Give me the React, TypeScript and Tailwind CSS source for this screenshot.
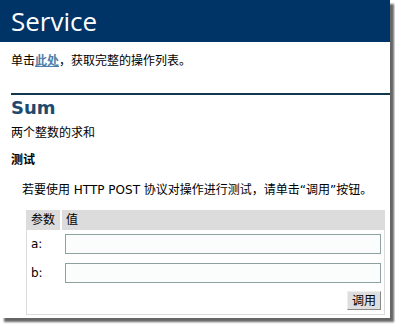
import React from "react";

const CJK = "font-['DejaVu_Sans','Noto_Sans_CJK_SC',sans-serif]";

export default function App() {
  return (
    <div className="w-[395px] h-[325px] bg-white overflow-hidden">
      <div className={`w-[390px] h-[318px] bg-white shadow-[4px_4px_2px_#666] overflow-hidden ${CJK} text-[12px] text-black`}>
        <div className="h-[42px] bg-[#003366] flex items-center pl-[11px]">
          <span className="text-white text-[26px] leading-none font-['Open_Sans',sans-serif]">Service</span>
        </div>
        <div className="pl-[11px] pt-[11px] leading-[16px]">
          单击<a className="font-bold text-[#4f7fa8] underline">此处</a>，获取完整的操作列表。
        </div>
        <div className="ml-[11px] mt-[24px] h-[2px] bg-[#13384d]" />
        <div className="pl-[11px] mt-[2px] text-[18px] font-bold text-[#1d4a6e] leading-[22px] font-['DejaVu_Sans',sans-serif]">Sum</div>
        <div className="pl-[11px] mt-[6px] leading-[16px]">两个整数的求和</div>
        <div className="pl-[11px] mt-[11px] leading-[16px] font-bold">测试</div>
        <div className="pl-[22px] mt-[14px] leading-[16px] whitespace-nowrap">若要使用 HTTP POST 协议对操作进行测试，请单击“调用”按钮。</div>
        <div className="ml-[26px] mr-[5px] mt-[12px] border border-[#dcdcdc] border-t-0 pb-[4px]">
          <div className="h-[20px] bg-[#dcdcdc] flex items-center">
            <div className="w-[33px] pl-[4px]">参数</div>
            <div className="w-[2px] h-full bg-white" />
            <div className="pl-[4px]">值</div>
          </div>
          <div className="flex items-center mt-[4px]">
            <div className="w-[38px] pl-[4px]">a:</div>
            <input className="w-[316px] h-[20px] border border-[#8fa0a0] bg-[#fbfdfd]" />
          </div>
          <div className="flex items-center mt-[9px]">
            <div className="w-[38px] pl-[4px]">b:</div>
            <input className="w-[316px] h-[20px] border border-[#8fa0a0] bg-[#fbfdfd]" />
          </div>
          <div className="flex justify-end pr-[3px] mt-[8px]">
            <button className="w-[34px] h-[19px] bg-[#dedede] border border-[#888] border-t-[#eee] border-l-[#eee] text-[12px] leading-none">调用</button>
          </div>
        </div>
      </div>
    </div>
  );
}
